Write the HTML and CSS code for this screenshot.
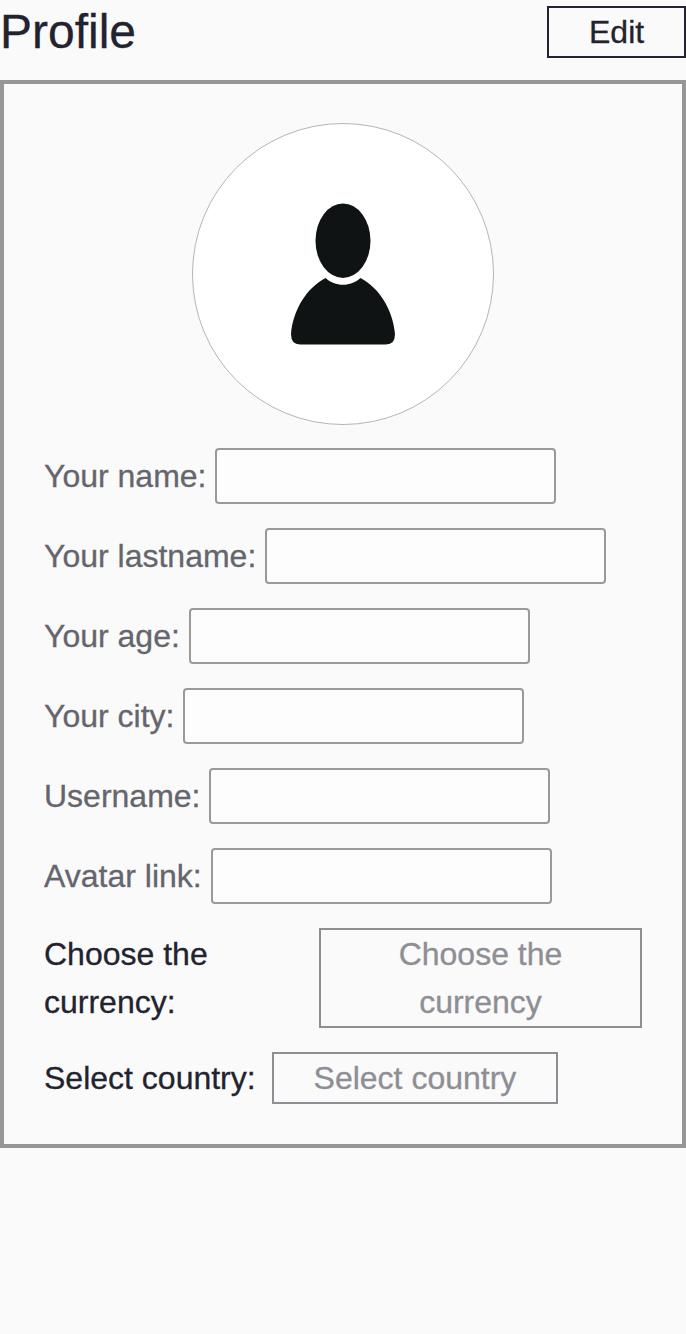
FILE: index.html
```html
<!DOCTYPE html>
<html lang="en">
<head>
<meta charset="utf-8">
<title>Profile</title>
<link rel="stylesheet" href="styles.css">
</head>
<body>
<header class="header">
  <h1 class="title">Profile</h1>
  <button class="btn btn-edit">Edit</button>
</header>
<main class="card">
  <div class="avatar">
    <svg width="104" height="142" viewBox="0 0 104 142" fill="#101313">
      <ellipse cx="52" cy="37.700" rx="27.500" ry="37.200"/>
      <path d="M34.500 75C44 84 60 84 69.500 75C88 84.500 102 107 104 131Q104 141.500 95 141.500H9Q0 141.500 0 131C2 107 16 84.500 34.500 75Z"/>
    </svg>
  </div>
  <div class="fields">
    <label class="field">Your name: <input class="input" type="text"></label>
    <label class="field">Your lastname: <input class="input" type="text"></label>
    <label class="field">Your age: <input class="input" type="text"></label>
    <label class="field">Your city: <input class="input" type="text"></label>
    <label class="field">Username: <input class="input" type="text"></label>
    <label class="field">Avatar link: <input class="input" type="text"></label>
  </div>
  <div class="choice choice-currency">
    <span class="choice-label">Choose the currency:</span>
    <button class="btn btn-muted btn-currency">Choose the currency</button>
  </div>
  <div class="choice">
    <span class="choice-label">Select country:</span>
    <button class="btn btn-muted btn-country">Select country</button>
  </div>
</main>
</body>
</html>
```
FILE: styles.css
```css
* { box-sizing: border-box; }
body {
  margin: 0;
  background: #fafafa;
  color: #22232e;
  font: 32px/48px "Liberation Sans", Arial, sans-serif;
  -webkit-text-stroke: 0.3px currentColor;
}
.header {
  display: flex;
  justify-content: space-between;
  height: 80px;
  padding-top: 6px;
}
.title {
  margin: 0;
  font-size: 48px;
  font-weight: 400;
  line-height: 52px;
}
.btn {
  padding: 0 40px;
  border: 2px solid #22232e;
  background: transparent;
  color: inherit;
  font: inherit;
}
.btn-edit { width: 139px; height: 52px; }
.card {
  height: 1068px;
  padding: 39px 40px;
  border: 4px solid #969695;
}
.avatar {
  display: flex;
  justify-content: center;
  width: 302px;
  height: 302px;
  margin: 0 auto 23px;
  padding-top: 79px;
  border: 1px solid #b5b5b5;
  border-radius: 50%;
  background: #fff;
}
.fields {
  display: grid;
  gap: 24px;
  margin-bottom: 24px;
  color: #65656d;
}
.field {
  display: flex;
  align-items: center;
  gap: 8.89px;
  height: 56px;
}
.input {
  width: 341px;
  height: 56px;
  border: 2px solid #9a9a9a;
  border-radius: 4px;
  background: #fdfdfd;
}
.choice { display: flex; gap: 16.3px; }
.choice-currency { gap: 75px; margin-bottom: 24px; }
.choice-currency .choice-label { width: 200px; }
.choice-label { padding-top: 2px; }
.btn-muted { border-color: #8e8e95; color: #8e8e95; }
.btn-currency { width: 323px; height: 100px; }
.btn-country { width: 286px; height: 52px; padding: 0; white-space: nowrap; }
```
